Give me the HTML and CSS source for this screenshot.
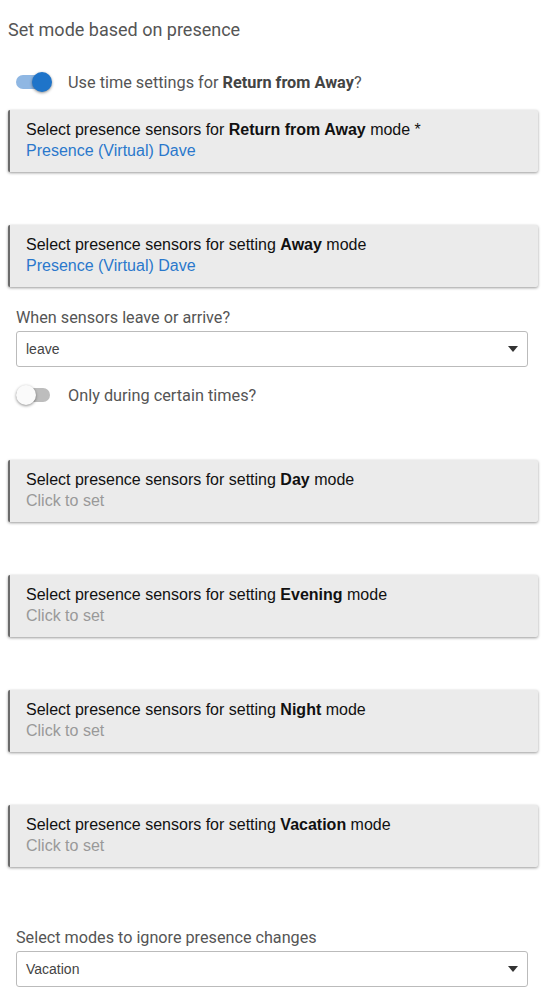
FILE: index.html
```html
<!DOCTYPE html>
<html>
<head>
    <meta charset="UTF-8">
    <meta name="viewport" content="width=device-width, initial-scale=1.0">
    <title>Set mode based on presence</title>
    <link rel="stylesheet" href="styles.css">
</head>
<body>
    <div class="page">
        <div class="title">Set mode based on presence</div>

        <div class="toggle-row first">
            <span class="switch on"><span class="knob"></span></span>
            <span class="toggle-label">Use time settings for <b>Return from Away</b>?</span>
        </div>

        <div class="card first">
            <div class="card-title">Select presence sensors for <b>Return from Away</b> mode *</div>
            <div class="card-value">Presence (Virtual) Dave</div>
        </div>

        <div class="card">
            <div class="card-title">Select presence sensors for setting <b>Away</b> mode</div>
            <div class="card-value">Presence (Virtual) Dave</div>
        </div>

        <div class="field">
            <div class="field-label">When sensors leave or arrive?</div>
            <div class="select">
                <span>leave</span>
                <span class="caret"></span>
            </div>
        </div>

        <div class="toggle-row">
            <span class="switch"><span class="knob"></span></span>
            <span class="toggle-label">Only during certain times?</span>
        </div>

        <div class="card spaced">
            <div class="card-title">Select presence sensors for setting <b>Day</b> mode</div>
            <div class="card-value empty">Click to set</div>
        </div>

        <div class="card">
            <div class="card-title">Select presence sensors for setting <b>Evening</b> mode</div>
            <div class="card-value empty">Click to set</div>
        </div>

        <div class="card">
            <div class="card-title">Select presence sensors for setting <b>Night</b> mode</div>
            <div class="card-value empty">Click to set</div>
        </div>

        <div class="card">
            <div class="card-title">Select presence sensors for setting <b>Vacation</b> mode</div>
            <div class="card-value empty">Click to set</div>
        </div>

        <div class="field last">
            <div class="field-label">Select modes to ignore presence changes</div>
            <div class="select">
                <span>Vacation</span>
                <span class="caret"></span>
            </div>
        </div>
    </div>
</body>
</html>
```

FILE: styles.css
```css
body {
    margin: 0;
    background-color: white;
    font-family: Roboto, "Liberation Sans", Arial, sans-serif;
}
.page {
    padding: 18px 9px 0 8px;
}
.title {
    font-size: 18px;
    line-height: 24px;
    color: #555;
}
.toggle-row {
    display: flex;
    align-items: center;
    height: 24px;
    margin-top: 16px;
    padding-left: 8px;
}
.toggle-row.first {
    margin-top: 28px;
}
.switch {
    position: relative;
    width: 34px;
    height: 14px;
    border-radius: 7px;
    background-color: #bdbdbd;
    margin-right: 18px;
}
.switch .knob {
    position: absolute;
    top: -3px;
    left: 0;
    width: 20px;
    height: 20px;
    border-radius: 50%;
    background-color: #fafafa;
    box-shadow: 0 1px 3px rgba(0,0,0,0.45);
}
.switch.on {
    background-color: #8fb7e3;
}
.switch.on .knob {
    left: 16px;
    background-color: #1f74c9;
}
.toggle-label {
    font-size: 16.3px;
    color: #555;
}
.toggle-label b {
    color: #444;
    font-weight: 700;
}
.card {
    margin-top: 53px;
    padding: 9px 16px 11px 16px;
    background-color: #ebebeb;
    border-left: 2px solid #6b6b6b;
    border-radius: 2px;
    box-shadow: 0 1px 3px rgba(0,0,0,0.4);
    font-family: "Liberation Sans", Arial, sans-serif;
    font-size: 16px;
    line-height: 21px;
}
.card.first {
    margin-top: 16px;
}
.card.spaced {
    margin-top: 53px;
}
.card-title {
    color: #111;
}
.card-value {
    color: #2a78cc;
}
.card-value.empty {
    color: #999;
}
.field {
    margin-top: 21px;
    padding: 0 10px 0 8px;
}
.field.last {
    margin-top: 61px;
}
.field-label {
    font-size: 16.2px;
    line-height: 20px;
    color: #555;
}
.select {
    display: flex;
    align-items: center;
    justify-content: space-between;
    height: 34px;
    margin-top: 3px;
    padding: 0 9px 0 9px;
    border: 1px solid #bbb;
    border-radius: 3px;
    font-family: "Liberation Sans", Arial, sans-serif;
    font-size: 14px;
    color: #444;
}
.caret {
    width: 0;
    height: 0;
    border-left: 5px solid transparent;
    border-right: 5px solid transparent;
    border-top: 6px solid #333;
}
```
